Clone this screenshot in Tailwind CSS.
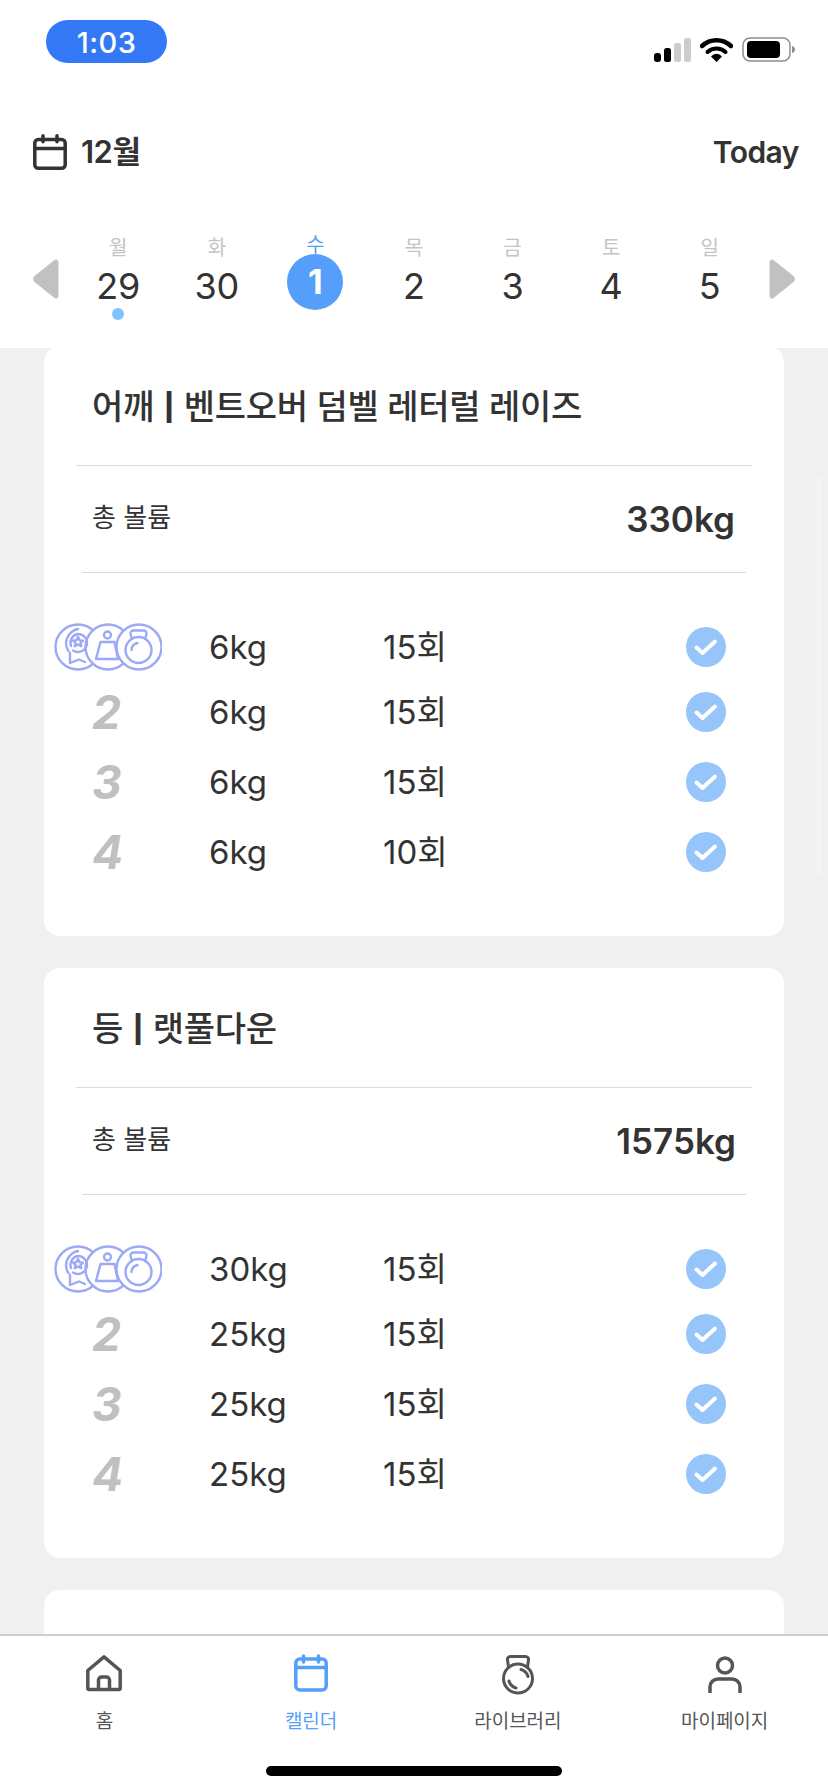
<!DOCTYPE html>
<html>
<head>
<meta charset="utf-8">
<title>캘린더</title>
<script src="https://cdn.jsdelivr.net/npm/@tailwindcss/browser@4"></script>
</head>
<body class="bg-white">
<svg class="hidden" xmlns="http://www.w3.org/2000/svg">
  <symbol id="badges" viewBox="0 0 108 48">
    <g fill="#fff" stroke="#9ba9f7" stroke-width="2.400">
      <circle cx="24" cy="24" r="22.500"/>
      <circle cx="54" cy="24" r="22.500"/>
      <circle cx="85" cy="24" r="22.500"/>
    </g>
    <g fill="none" stroke="#9ba9f7" stroke-width="2.400" stroke-linejoin="round" stroke-linecap="round">
      <path d="M24 6a15 15 0 0 0-12 14c0 3 1 6 2.500 8"/>
      <path d="M24 11a9 9 0 1 1-5 16.500M24 11a9 9 0 0 0-7 12"/>
      <path d="M24 14l1.600 3.200 3.400.4-2.500 2.300.7 3.300-3.200-1.700-3.200 1.700.7-3.300-2.500-2.300 3.400-.4z"/>
      <path d="M16 30v10l9-3.500 6 2.500"/>
      <circle cx="53.500" cy="12" r="3.500"/>
      <path d="M46.500 19h14l3.500 17h-22z"/>
      <circle cx="84.500" cy="27" r="13"/>
      <path d="M78 16l-1.500-5a3 3 0 0 1 3-3.500h10a3 3 0 0 1 3 3.500l-1.500 5"/>
      <path d="M77.500 27a7.500 7.500 0 0 1 6-7"/>
    </g>
  </symbol>
  <symbol id="check" viewBox="0 0 40 40">
    <circle cx="20" cy="20" r="20" fill="#96c5fb"/>
    <path d="M10.500 20.500l6 5.500 12.500-11.500" fill="none" stroke="#fff" stroke-width="4" stroke-linecap="round" stroke-linejoin="round"/>
  </symbol>
</svg>

<div class="relative w-[828px] h-[1792px] overflow-hidden flex flex-col font-['Inter','Noto_Sans_CJK_KR',sans-serif] text-[#333]">

  <!-- header -->
  <header class="relative z-10 h-[348px] shrink-0 bg-white">
    <div class="flex items-start justify-between h-[134px] pl-[46px] pr-[33px] pt-[20px]">
      <div class="w-[121px] h-[43px] rounded-[22px] bg-[#3478f6] text-white text-[29px] font-medium leading-[46px] text-center tracking-[0.5px]">1:03</div>
      <div class="flex items-center gap-[9px] pt-[17px]">
        <svg width="37" height="24" viewBox="0 0 37 24"><rect x="0" y="15" width="7" height="9" rx="3" fill="#000"/><rect x="10" y="10" width="7" height="14" rx="2.500" fill="#000"/><rect x="20" y="5" width="7" height="19" rx="2.500" fill="#ccc"/><rect x="30" y="0" width="7" height="24" rx="2.500" fill="#ccc"/></svg>
        <svg width="33" height="25" viewBox="0 0 33 25"><path d="M2 9a21 21 0 0 1 29 0" fill="none" stroke="#000" stroke-width="4.500" stroke-linecap="round"/><path d="M7.500 15a13 13 0 0 1 18 0" fill="none" stroke="#000" stroke-width="4" stroke-linecap="round"/><path d="M11 19.500a7 7 0 0 1 11 0l-5.500 5.500z" fill="#000"/></svg>
        <svg width="53" height="25" viewBox="0 0 53 25"><rect x="1" y="1" width="47" height="23" rx="7" fill="none" stroke="#8e8e8e" stroke-width="1.500"/><rect x="5" y="4" width="33" height="17" rx="4" fill="#000"/><path d="M50 9c2 .5 3 2 3 3.500s-1 3-3 3.500z" fill="#8e8e8e"/></svg>
      </div>
    </div>
    <div class="flex items-center justify-between h-[36px] pl-[33px] pr-[29px]">
      <div class="flex items-center gap-[14px]">
        <svg width="34" height="36" viewBox="0 0 34 36" fill="none" stroke="#333" stroke-width="3.500" stroke-linecap="round" stroke-linejoin="round"><rect x="1.800" y="5.500" width="30.400" height="28.700" rx="3.500"/><path d="M1.800 14.500h30.400M10 1.800v6M24 1.800v6"/></svg>
        <span class="text-[31px] leading-[36px] font-semibold tracking-[-0.5px]">12월</span>
      </div>
      <span class="text-[30px] leading-[36px] font-semibold tracking-[-0.5px]">Today</span>
    </div>
    <div class="flex items-center justify-between pl-[33px] pr-[33px] mt-[64px]">
      <svg class="mt-[3px]" width="26" height="40" viewBox="0 0 26 40"><path d="M25.500 3v34a2.500 2.500 0 0 1-4 2L1.500 23a4 4 0 0 1 0-6l20-16a2.500 2.500 0 0 1 4 2z" fill="#c1c1c1"/></svg>
      <div class="grid grid-cols-7 w-[690px] text-center">
        <div class="flex flex-col items-center h-[86px]">
          <span class="text-[20px] leading-[28px] text-[#c4c4c4]">월</span>
          <span class="text-[36px] leading-[44px] mt-[2px]">29</span>
          <span class="w-[12px] h-[12px] rounded-full bg-[#7fc4fd] mt-[0px]"></span>
        </div>
        <div class="flex flex-col items-center h-[86px]">
          <span class="text-[20px] leading-[28px] text-[#c4c4c4]">화</span>
          <span class="text-[36px] leading-[44px] mt-[2px]">30</span>
        </div>
        <div class="relative flex flex-col items-center h-[86px]">
          <span class="text-[20px] leading-[28px] text-[#559ffa] mt-[-3px]">수</span>
          <span class="w-[56px] h-[56px] rounded-full bg-[#559ffa] text-white text-[34px] font-bold leading-[56px] mt-[-5px]">1</span>
        </div>
        <div class="flex flex-col items-center h-[86px]">
          <span class="text-[20px] leading-[28px] text-[#c4c4c4]">목</span>
          <span class="text-[36px] leading-[44px] mt-[2px]">2</span>
        </div>
        <div class="flex flex-col items-center h-[86px]">
          <span class="text-[20px] leading-[28px] text-[#c4c4c4]">금</span>
          <span class="text-[36px] leading-[44px] mt-[2px]">3</span>
        </div>
        <div class="flex flex-col items-center h-[86px]">
          <span class="text-[20px] leading-[28px] text-[#c4c4c4]">토</span>
          <span class="text-[36px] leading-[44px] mt-[2px]">4</span>
        </div>
        <div class="flex flex-col items-center h-[86px]">
          <span class="text-[20px] leading-[28px] text-[#c4c4c4]">일</span>
          <span class="text-[36px] leading-[44px] mt-[2px]">5</span>
        </div>
      </div>
      <svg class="mt-[3px]" width="26" height="40" viewBox="0 0 26 40"><path d="M.5 3v34a2.500 2.500 0 0 0 4 2l20-16a4 4 0 0 0 0-6L4.500 1a2.500 2.500 0 0 0-4 2z" fill="#c1c1c1"/></svg>
    </div>
  </header>

  <!-- workout list -->
  <main class="relative mt-[-2px] flex-1 min-h-0 overflow-hidden bg-[#f0f0f0] px-[44px] flex flex-col gap-[32px]">

    <section class="shrink-0 h-[590px] rounded-[16px] bg-white">
      <h2 class="h-[119px] pl-[48px] pt-[37px] text-[34px] leading-[48px] font-medium tracking-[-0.3px]">어깨 <span class="inline-block scale-y-80 font-bold">|</span> 벤트오버 덤벨 레터럴 레이즈</h2>
      <div class="mx-[32px] border-t border-[#dcdcdc]"></div>
      <div class="flex items-center justify-between h-[106px] pl-[48px] pr-[49px]">
        <span class="text-[26px] mt-[-4px]">총 볼륨</span>
        <span class="text-[35px] font-semibold">330kg</span>
      </div>
      <div class="mx-[38px] border-t border-[#dcdcdc]"></div>
      <div class="pt-[44px] text-[33px]">
        <div class="relative flex items-center h-[60px] pl-[165px] pr-[58px]">
          <svg class="absolute left-[10px] top-[6px]" width="108" height="48"><use href="#badges"/></svg>
          <span class="w-[174px] mt-[2px]">6kg</span><span class="flex-1 mt-[2px]">15회</span>
          <svg width="40" height="40"><use href="#check"/></svg>
        </div>
        <div class="flex items-center h-[70px] pr-[58px]">
          <span class="w-[165px] pl-[48px] text-[46px] font-bold italic text-[#c0c0c0]">2</span>
          <span class="w-[174px] mt-[2px]">6kg</span><span class="flex-1 mt-[2px]">15회</span>
          <svg width="40" height="40"><use href="#check"/></svg>
        </div>
        <div class="flex items-center h-[70px] pr-[58px]">
          <span class="w-[165px] pl-[48px] text-[46px] font-bold italic text-[#c0c0c0]">3</span>
          <span class="w-[174px] mt-[2px]">6kg</span><span class="flex-1 mt-[2px]">15회</span>
          <svg width="40" height="40"><use href="#check"/></svg>
        </div>
        <div class="flex items-center h-[70px] pr-[58px]">
          <span class="w-[165px] pl-[48px] text-[46px] font-bold italic text-[#c0c0c0]">4</span>
          <span class="w-[174px] mt-[2px]">6kg</span><span class="flex-1 mt-[2px]">10회</span>
          <svg width="40" height="40"><use href="#check"/></svg>
        </div>
      </div>
    </section>

    <section class="shrink-0 h-[590px] rounded-[16px] bg-white">
      <h2 class="h-[119px] pl-[48px] pt-[37px] text-[34px] leading-[48px] font-medium tracking-[-0.3px]">등 <span class="inline-block scale-y-80 font-bold">|</span> 랫풀다운</h2>
      <div class="mx-[32px] border-t border-[#dcdcdc]"></div>
      <div class="flex items-center justify-between h-[106px] pl-[48px] pr-[48px]">
        <span class="text-[26px] mt-[-4px]">총 볼륨</span>
        <span class="text-[35px] font-semibold">1575kg</span>
      </div>
      <div class="mx-[38px] border-t border-[#dcdcdc]"></div>
      <div class="pt-[44px] text-[33px]">
        <div class="relative flex items-center h-[60px] pl-[165px] pr-[58px]">
          <svg class="absolute left-[10px] top-[6px]" width="108" height="48"><use href="#badges"/></svg>
          <span class="w-[174px] mt-[2px]">30kg</span><span class="flex-1 mt-[2px]">15회</span>
          <svg width="40" height="40"><use href="#check"/></svg>
        </div>
        <div class="flex items-center h-[70px] pr-[58px]">
          <span class="w-[165px] pl-[48px] text-[46px] font-bold italic text-[#c0c0c0]">2</span>
          <span class="w-[174px] mt-[2px]">25kg</span><span class="flex-1 mt-[2px]">15회</span>
          <svg width="40" height="40"><use href="#check"/></svg>
        </div>
        <div class="flex items-center h-[70px] pr-[58px]">
          <span class="w-[165px] pl-[48px] text-[46px] font-bold italic text-[#c0c0c0]">3</span>
          <span class="w-[174px] mt-[2px]">25kg</span><span class="flex-1 mt-[2px]">15회</span>
          <svg width="40" height="40"><use href="#check"/></svg>
        </div>
        <div class="flex items-center h-[70px] pr-[58px]">
          <span class="w-[165px] pl-[48px] text-[46px] font-bold italic text-[#c0c0c0]">4</span>
          <span class="w-[174px] mt-[2px]">25kg</span><span class="flex-1 mt-[2px]">15회</span>
          <svg width="40" height="40"><use href="#check"/></svg>
        </div>
      </div>
    </section>

    <section class="shrink-0 h-[590px] rounded-[16px] bg-white"></section>

    <!-- scrollbar -->
    <div class="absolute right-[6px] top-[130px] w-[6px] h-[400px] rounded-full bg-[#f4f4f4]"></div>
  </main>

  <!-- tab bar -->
  <nav class="relative z-10 h-[158px] shrink-0 bg-white border-t-2 border-[#d0d0d0]">
    <div class="grid grid-cols-4 pl-[1px] pt-[18px] text-center text-[19px] leading-[28px] text-[#555]">
      <div class="flex flex-col items-center">
        <svg class="h-[42px]" width="36" height="42" viewBox="0 0 36 42" fill="none" stroke="#555" stroke-width="3.500" stroke-linejoin="round" stroke-linecap="round"><path d="M1.800 16.500 18 2.800l16.200 13.700V34a1.500 1.500 0 0 1-1.500 1.500H3.300A1.500 1.500 0 0 1 1.800 34z"/><path d="M12.500 35v-9a3 3 0 0 1 3-3h5a3 3 0 0 1 3 3v9"/></svg>
        <span class="mt-[12px]">홈</span>
      </div>
      <div class="flex flex-col items-center text-[#559ffa]">
        <svg class="h-[42px]" width="34" height="42" viewBox="0 0 34 42" fill="none" stroke="#559ffa" stroke-width="3.500" stroke-linejoin="round" stroke-linecap="round"><rect x="1.800" y="5" width="30.400" height="31" rx="4"/><path d="M1.800 13.500h30.400M9.500 2v6M24.500 2v6"/></svg>
        <span class="mt-[12px]">캘린더</span>
      </div>
      <div class="flex flex-col items-center">
        <svg class="h-[42px]" width="32" height="42" viewBox="0 0 32 42" fill="none" stroke="#555" stroke-width="3" stroke-linejoin="round" stroke-linecap="round"><circle cx="16" cy="24.500" r="14.500"/><path d="M6.500 13 5.500 6a3 3 0 0 1 3-3.500h15a3 3 0 0 1 3 3.500l-1 7"/><path d="M7 27a10 10 0 0 0 7 7M19 15.500a10 10 0 0 1 7 7"/></svg>
        <span class="mt-[12px]">라이브러리</span>
      </div>
      <div class="flex flex-col items-center">
        <svg class="h-[42px]" width="34" height="42" viewBox="0 0 34 42" fill="none" stroke="#555" stroke-width="3.500" stroke-linecap="butt"><circle cx="17" cy="11.500" r="7.500"/><path d="M2 39v-6a8 8 0 0 1 8-8h14a8 8 0 0 1 8 8v6"/></svg>
        <span class="mt-[12px]">마이페이지</span>
      </div>
    </div>
    <div class="absolute left-[266px] bottom-[16px] w-[296px] h-[10px] rounded-full bg-black"></div>
  </nav>
</div>
</body>
</html>
